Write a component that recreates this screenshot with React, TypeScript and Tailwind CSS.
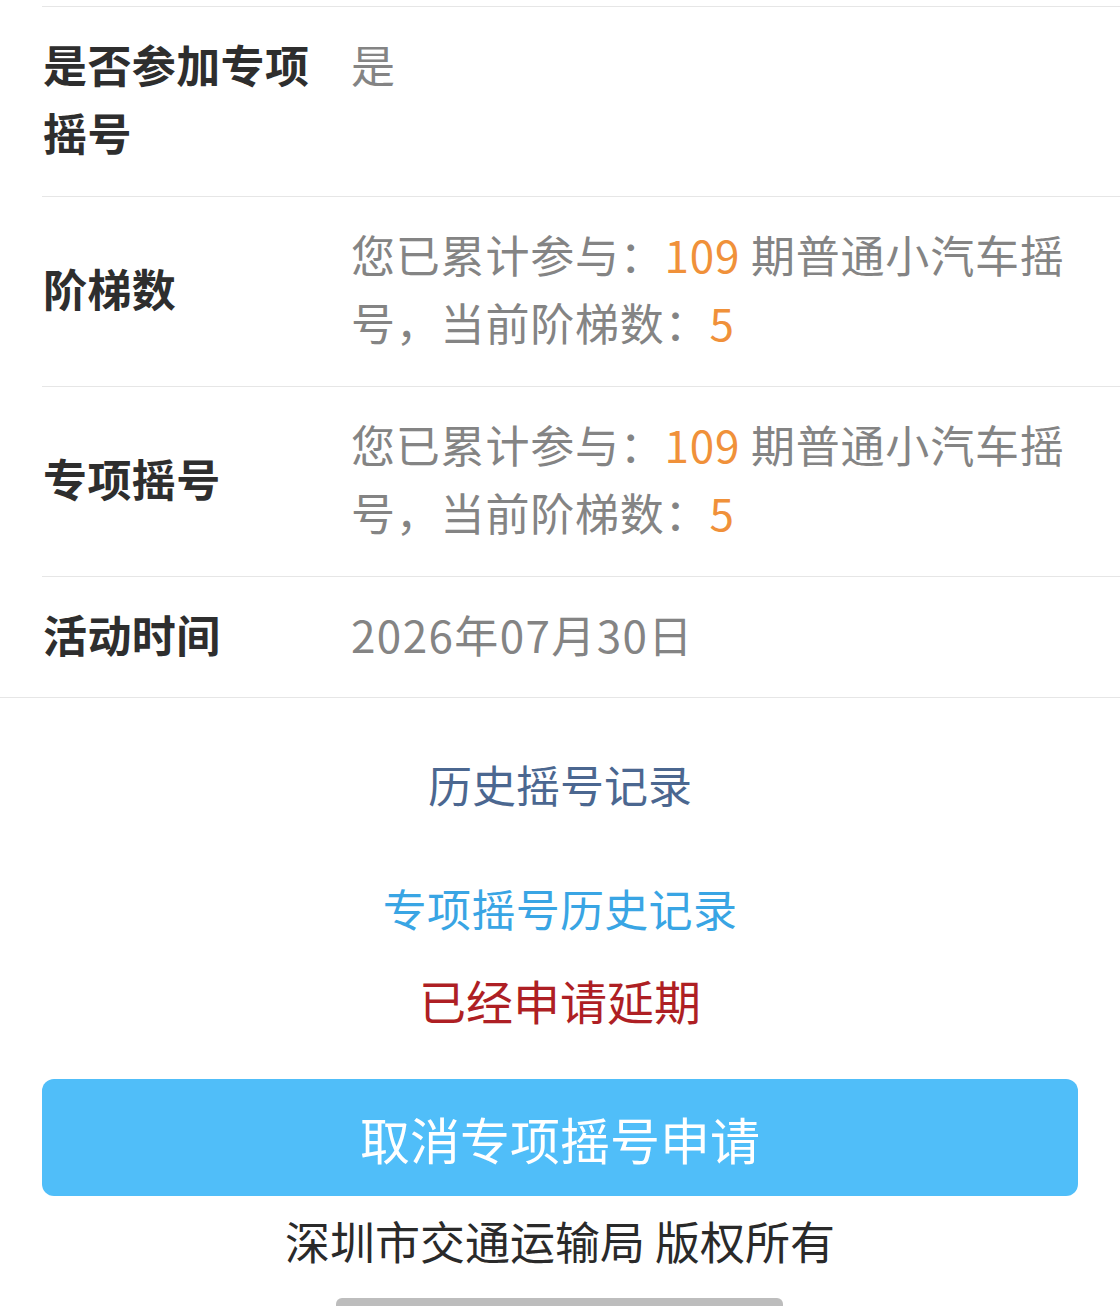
import React from "react";

const font = { fontFamily: '"Noto Sans CJK SC", "Noto Sans", sans-serif' };

function Row({ label, children, top = false }: { label: React.ReactNode; children: React.ReactNode; top?: boolean }) {
  return (
    <div className={`flex ${top ? "items-start" : "items-center"} ml-[42px] border-b border-[#e6e6e6] pt-[23px] pb-[30px]`}>
      <div className="w-[290px] shrink-0 pl-[1px] text-[44px] leading-[68px] font-bold text-[#2e2e2e] tracking-[0.4px]">{label}</div>
      <div className="ml-[19px] flex-1 pr-[10px] text-[44px] leading-[68px] text-[#848484] tracking-[0.8px]">{children}</div>
    </div>
  );
}

export default function App() {
  const orange = "text-[#f0913a]";
  return (
    <div className="w-[1120px] h-[1306px] bg-white overflow-hidden relative" style={font}>
      <div className="h-[6px]" />
      <div className="ml-[42px] border-b border-[#e6e6e6]" />
      <Row label={<>是否参加专项<br />摇号</>} top>
        <span>是</span>
      </Row>
      <Row label="阶梯数">
        您已累计参与：<span className={orange}>109</span> 期普通小汽车摇号，当前阶梯数：<span className={orange}>5</span>
      </Row>
      <Row label="专项摇号">
        您已累计参与：<span className={orange}>109</span> 期普通小汽车摇号，当前阶梯数：<span className={orange}>5</span>
      </Row>
      <div className="flex items-center border-b border-[#e6e6e6] pt-[23px] pb-[29px]">
        <div className="ml-[42px] w-[290px] shrink-0 pl-[1px] text-[44px] leading-[68px] font-bold text-[#2e2e2e] tracking-[0.4px]">活动时间</div>
        <div className="ml-[19px] text-[44px] leading-[68px] text-[#848484] tracking-[1.4px]">2026年07月30日</div>
      </div>

      <div className="flex flex-col items-center">
        <div className="mt-[52px] text-[44px] leading-[68px] text-[#4b6790]">历史摇号记录</div>
        <div className="mt-[56px] text-[44px] leading-[68px] text-[#39a5e4] tracking-[0.3px]">专项摇号历史记录</div>
        <div className="mt-[24px] text-[47px] leading-[68px] text-[#ae1f24]">已经申请延期</div>
      </div>

      <div className="mt-[45px] ml-[42px] w-[1036px] h-[117px] rounded-[12px] bg-[#50bef9] flex items-center justify-center">
        <span className="text-[50px] text-white leading-none">取消专项摇号申请</span>
      </div>

      <div className="mt-[11px] text-center text-[45px] leading-[68px] text-[#2a2a2a]">深圳市交通运输局 版权所有</div>

      <div className="absolute left-[336px] bottom-0 w-[447px] h-[8px] rounded-t-[6px] bg-[#bdbdbd]" />
    </div>
  );
}
